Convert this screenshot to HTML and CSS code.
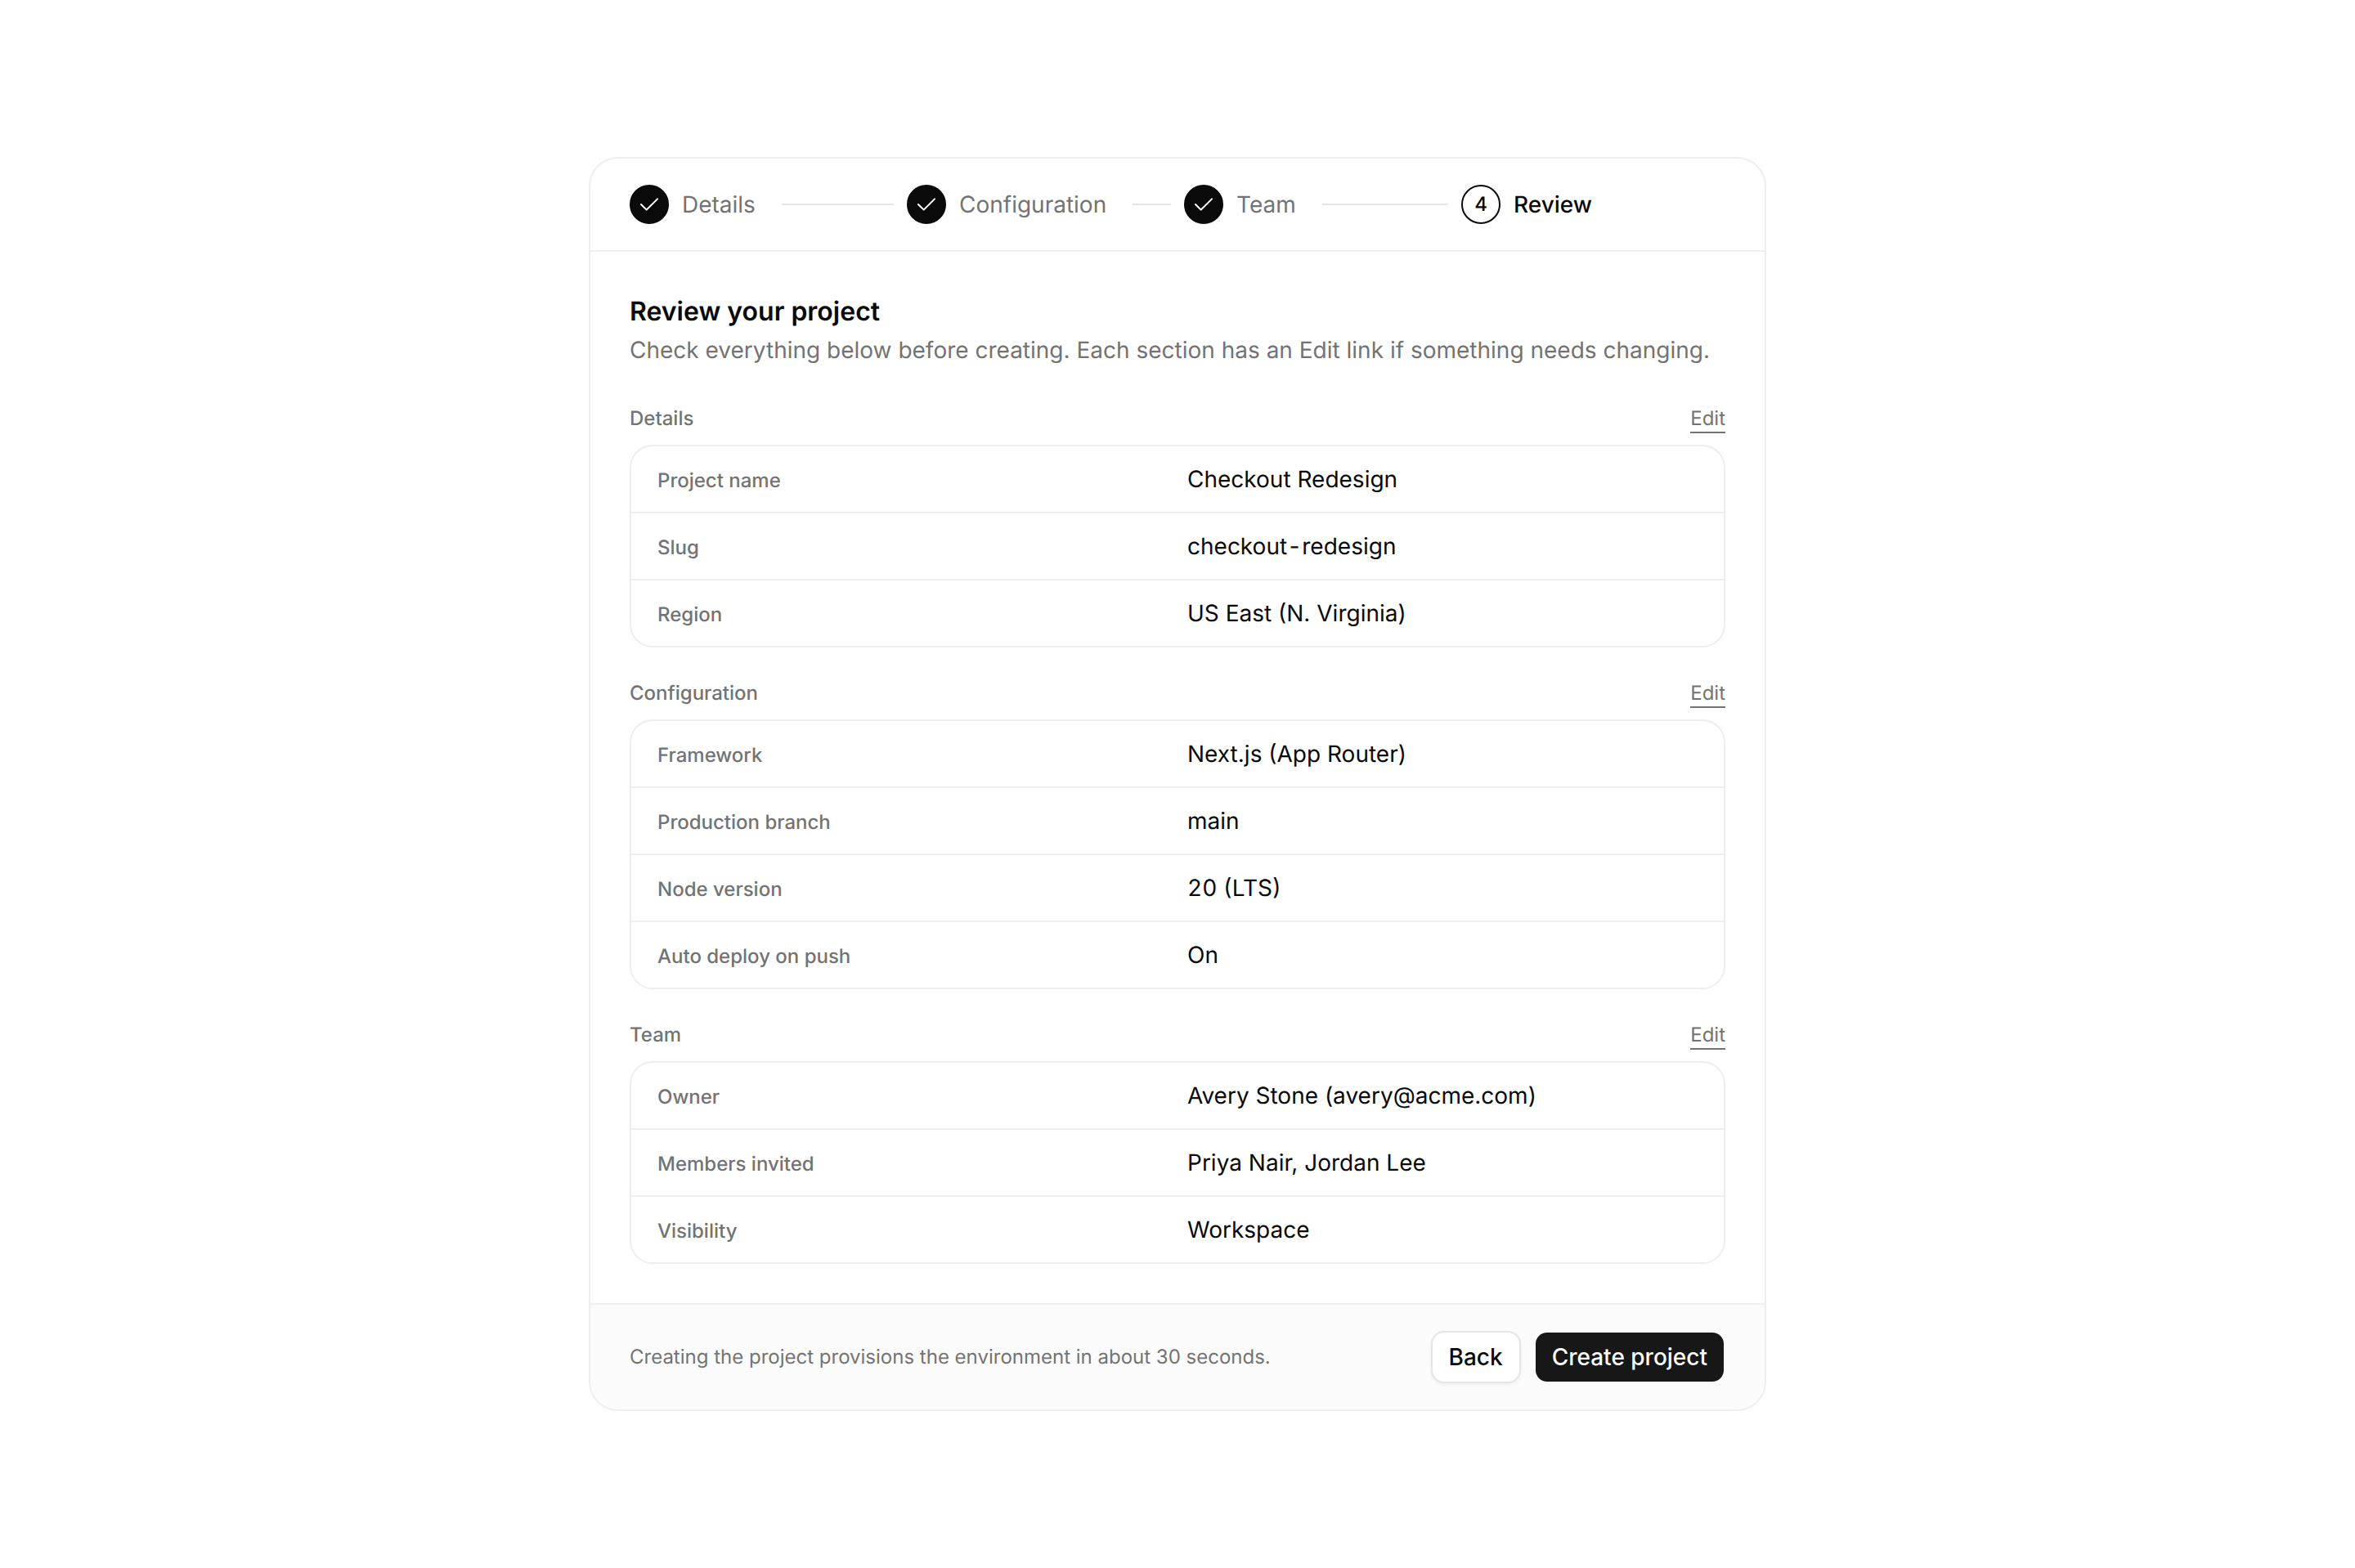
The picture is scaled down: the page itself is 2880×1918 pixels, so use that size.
FILE: index.html
```html
<!DOCTYPE html>
<html lang="en">
<head>
    <meta charset="utf-8">
    <title>Review your project</title>
    <link rel="stylesheet" href="styles.css">
</head>
<body>

<main class="card">
    <ol class="steps">
        <li class="step">
            <span class="marker done">
                <svg class="check" viewBox="0 0 24 24"><path d="M4.5 12l5 5l10-10"/></svg>
            </span>
            <span class="step-label">Details</span>
            <span class="line"></span>
        </li>
        <li class="step">
            <span class="marker done">
                <svg class="check" viewBox="0 0 24 24"><path d="M4.5 12l5 5l10-10"/></svg>
            </span>
            <span class="step-label">Configuration</span>
            <span class="line"></span>
        </li>
        <li class="step">
            <span class="marker done">
                <svg class="check" viewBox="0 0 24 24"><path d="M4.5 12l5 5l10-10"/></svg>
            </span>
            <span class="step-label">Team</span>
            <span class="line"></span>
        </li>
        <li class="step current" aria-current="step">
            <span class="marker">4</span>
            <span class="step-label">Review</span>
        </li>
    </ol>

    <div class="content">
        <h1>Review your project</h1>
        <p class="intro">Check everything below before creating. Each section has an Edit link if something needs changing.</p>

        <section class="section">
            <div class="section-header">
                <h2>Details</h2>
                <a class="edit" href="#details">Edit</a>
            </div>
            <dl class="summary">
                <div class="row">
                    <dt>Project name</dt>
                    <dd>Checkout Redesign</dd>
                </div>
                <div class="row">
                    <dt>Slug</dt>
                    <dd class="code">checkout-redesign</dd>
                </div>
                <div class="row">
                    <dt>Region</dt>
                    <dd>US East (N. Virginia)</dd>
                </div>
            </dl>
        </section>

        <section class="section">
            <div class="section-header">
                <h2>Configuration</h2>
                <a class="edit" href="#configuration">Edit</a>
            </div>
            <dl class="summary">
                <div class="row">
                    <dt>Framework</dt>
                    <dd>Next.js (App Router)</dd>
                </div>
                <div class="row">
                    <dt>Production branch</dt>
                    <dd class="code">main</dd>
                </div>
                <div class="row">
                    <dt>Node version</dt>
                    <dd class="code">20 (LTS)</dd>
                </div>
                <div class="row">
                    <dt>Auto deploy on push</dt>
                    <dd>On</dd>
                </div>
            </dl>
        </section>

        <section class="section">
            <div class="section-header">
                <h2>Team</h2>
                <a class="edit" href="#team">Edit</a>
            </div>
            <dl class="summary">
                <div class="row">
                    <dt>Owner</dt>
                    <dd>Avery Stone (avery@acme.com)</dd>
                </div>
                <div class="row">
                    <dt>Members invited</dt>
                    <dd>Priya Nair, Jordan Lee</dd>
                </div>
                <div class="row">
                    <dt>Visibility</dt>
                    <dd>Workspace</dd>
                </div>
            </dl>
        </section>
    </div>

    <footer class="footer">
        <p class="note">Creating the project provisions the environment in about 30 seconds.</p>
        <div class="actions">
            <button type="button" class="btn backBtn">Back</button>
            <button type="button" class="btn createBtn">Create project</button>
        </div>
    </footer>
</main>

</body>
</html>
```
FILE: styles.css
```css
* {
    box-sizing: border-box;
}
body {
    font-family: Inter, "Liberation Sans", sans-serif;
    font-size: 28px;
    line-height: 40px;
    text-rendering: geometricPrecision;
    color: #0a0a0a;
    background-color: #ffffff;
    display: flex;
    justify-content: center;
    align-items: center;
    min-height: 100vh;
    margin: 0;
}
h1, h2, p, dl, dd, ol {
    margin: 0;
    padding: 0;
}
.card {
    width: 100%;
    max-width: 1440px;
    border: 2px solid #eeeeee;
    border-radius: 36px;
    overflow: hidden;
}

/* Step indicator */
.steps {
    display: flex;
    gap: 16px;
    padding: 32px 48px;
    border-bottom: 2px solid #eeeeee;
    list-style: none;
}
.step {
    flex: 1 1 0;
    display: flex;
    align-items: center;
    gap: 16px;
    color: #737373;
}
.marker {
    display: flex;
    justify-content: center;
    align-items: center;
    width: 48px;
    height: 48px;
    border: 2px solid #0a0a0a;
    border-radius: 50%;
    font-size: 24px;
    font-weight: 500;
}
.done {
    background-color: #0a0a0a;
}
.check {
    width: 32px;
    height: 32px;
    fill: none;
    stroke: #ffffff;
    stroke-width: 1.5;
    stroke-linecap: round;
    stroke-linejoin: round;
}
.current {
    color: #0a0a0a;
    font-weight: 500;
}
.line {
    flex: 1;
    height: 2px;
    margin-left: 16px;
    background-color: #e5e5e5;
}

/* Review content */
.content {
    padding: 48px;
}
h1 {
    font-size: 32px;
    line-height: 50px;
    font-weight: 600;
}
.intro {
    margin-top: 2px;
    margin-bottom: 48px;
    color: #737373;
}
.section + .section {
    margin-top: 40px;
}
.section-header {
    display: flex;
    justify-content: space-between;
    align-items: flex-start;
    margin-bottom: 14px;
}
h2, dt, .edit {
    font-size: 24px;
    line-height: 32px;
    color: #737373;
}
h2, dt {
    font-weight: 500;
}
.edit {
    border-bottom: 2px solid #737373;
    text-decoration: none;
}
.summary {
    border: 2px solid #eeeeee;
    border-radius: 28px;
}
.row {
    display: grid;
    grid-template-columns: 1fr 1fr;
    gap: 24px;
    align-items: baseline;
    padding: 20px 32px;
}
.row + .row {
    border-top: 2px solid #eeeeee;
}
.code {
    font-variant-numeric: tabular-nums;
}

/* Footer */
.footer {
    display: flex;
    justify-content: space-between;
    align-items: center;
    padding: 32px 48px;
    border-top: 2px solid #eeeeee;
    background-color: #fbfbfb;
}
.note {
    font-size: 24px;
    color: #737373;
}
.actions {
    display: flex;
    gap: 16px;
}
.btn {
    height: 64px;
    padding: 0 20px;
    border: 2px solid transparent;
    border-radius: 16px;
    font: inherit;
    font-weight: 500;
    cursor: pointer;
}
.backBtn {
    border-color: #e5e5e5;
    background-color: #ffffff;
    color: #0a0a0a;
    box-shadow: 0 2px 4px rgba(0, 0, 0, 0.05);
}
.createBtn {
    background-color: #171717;
    background-clip: padding-box;
    color: #fafafa;
}
```
